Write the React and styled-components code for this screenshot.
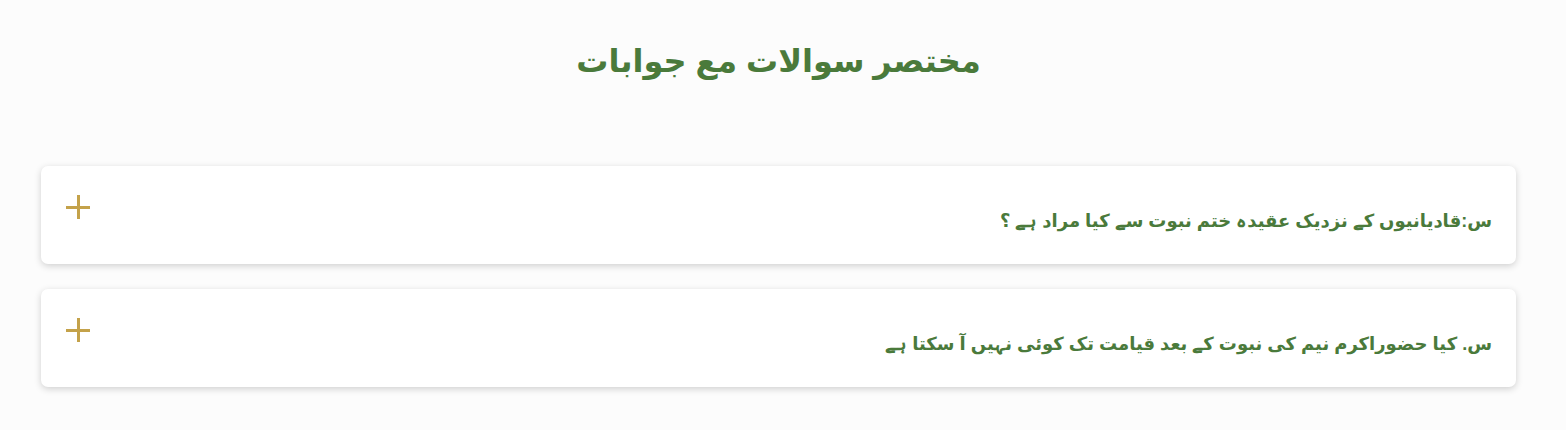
import React from "react";
import styled, { createGlobalStyle } from "styled-components";

const Global = createGlobalStyle`
  html, body { margin: 0; padding: 0; background: #fcfcfc; }
  body { font-family: "Liberation Sans", "DejaVu Sans", sans-serif; }
`;

const Page = styled.div`
  padding: 38px 50px 40px 41px;
`;

const Title = styled.h1`
  margin: 0 0 82px;
  text-align: center;
  font-size: 32px;
  font-weight: 700;
  line-height: 46px;
  color: #4a7a3b;
`;

const List = styled.div`
  display: flex;
  flex-direction: column;
  gap: 25px;
`;

const Card = styled.div`
  direction: rtl;
  display: flex;
  align-items: flex-start;
  justify-content: space-between;
  box-sizing: border-box;
  height: 98px;
  padding: 29px 24px 0 25px;
  background: #ffffff;
  border-radius: 7px;
  box-shadow: 0 2px 7px rgba(0, 0, 0, 0.18);
`;

const Question = styled.div`
  margin-top: 13px;
  font-size: 18px;
  font-weight: 700;
  line-height: 26px;
  color: #4a7a3b;
`;

const Plus = styled.span`
  position: relative;
  width: 24px;
  height: 24px;
  flex: none;
  &::before, &::after {
    content: "";
    position: absolute;
    background: #c4a24a;
  }
  &::before { left: 0; right: 0; top: 11px; height: 3px; }
  &::after { top: 0; bottom: 0; left: 11px; width: 3px; }
`;

const items = [
  "س:قادیانیوں کے نزدیک عقیدہ ختم نبوت سے کیا مراد ہے ؟",
  "س. کیا حضوراکرم نیم کی نبوت کے بعد قیامت تک کوئی نہیں آ سکتا ہے",
];

export default function App() {
  return (
    <Page>
      <Global />
      <Title dir="rtl">مختصر سوالات مع جوابات</Title>
      <List>
        {items.map((q) => (
          <Card key={q}>
            <Question>{q}</Question>
            <Plus />
          </Card>
        ))}
      </List>
    </Page>
  );
}
